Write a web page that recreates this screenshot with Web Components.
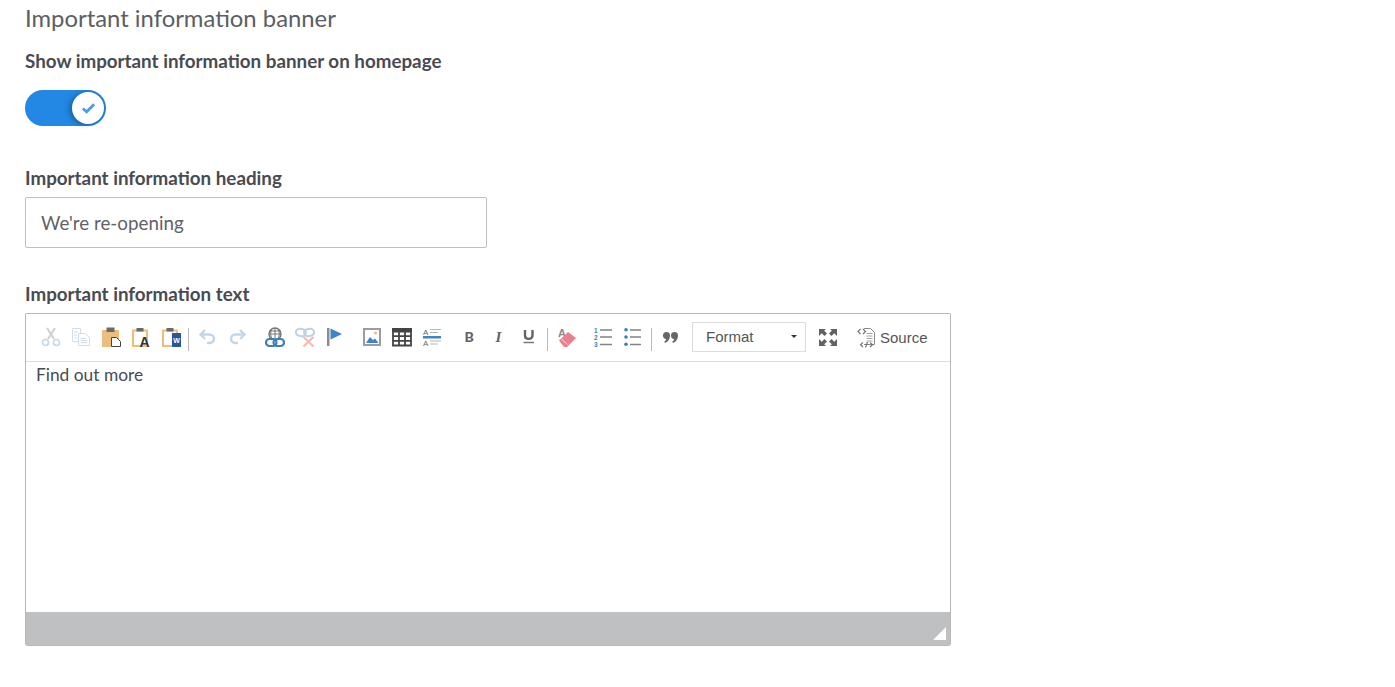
<!DOCTYPE html>
<html>
<head>
<meta charset="utf-8">
<title>Important information banner</title>
<style>
html, body { margin: 0; background: #fff; }
body { font-family: Lato, "Liberation Sans", sans-serif; color: #484b51; }
</style>
</head>
<body>
<banner-form>
  <section-title>Important information banner</section-title>
  <form-field label="Show important information banner on homepage" gap="17" after="40"><toggle-switch></toggle-switch></form-field>
  <form-field label="Important information heading" gap="7" after="34"><text-box value="We're re-opening"></text-box></form-field>
  <form-field label="Important information text" gap="7" after="0"><rich-editor>Find out more</rich-editor></form-field>
</banner-form>

<script>
(function () {
  function define(name, css, html, init) {
    customElements.define(name, class extends HTMLElement {
      constructor() {
        super();
        this.attachShadow({ mode: "open" });
        this.shadowRoot.innerHTML = "<style>" + css + "</style>" + html;
      }
      connectedCallback() {
        if (init) init.call(this, this.shadowRoot);
      }
    });
  }

  define("banner-form", ":host{display:block;padding:3px 0 0 25px}", "<slot></slot>");

  define("section-title",
    ":host{display:block;font-size:23.85px;line-height:30px;color:#5b5e63;margin-bottom:16px;font-weight:400}",
    "<slot></slot>");

  define("form-field",
    ":host{display:block} .l{font-size:18.8px;line-height:24px;font-weight:700;color:#484b51}",
    '<div class="l"></div><div class="c"><slot></slot></div>',
    function (root) {
      root.querySelector(".l").textContent = this.getAttribute("label");
      root.querySelector(".l").style.marginBottom = this.getAttribute("gap") + "px";
      this.style.marginBottom = this.getAttribute("after") + "px";
    });

  define("toggle-switch",
    ":host{display:block;width:81px;height:36px;border-radius:18px;background:linear-gradient(90deg,#2387e4 0,#2387e4 60%,#1f7fd8 100%);position:relative}" +
    ".k{position:absolute;right:2px;top:2px;width:32px;height:32px;border-radius:50%;background:#fff;box-shadow:-3px 1px 5px rgba(0,0,0,.25);display:flex;align-items:center;justify-content:center}",
    '<div class="k"><svg width="15" height="12" viewBox="0 0 16 12"><path d="M2 6.5 6 10 14 2" fill="none" stroke="#4a9ded" stroke-width="3"/></svg></div>');

  define("text-box",
    ":host{display:block;box-sizing:border-box;width:462px;height:51px;border:1px solid #bdbfc2;border-radius:2px;padding:0 15px;font-size:18.8px;line-height:49px;color:#5f6266}",
    '<span class="v"></span>',
    function (root) { root.querySelector(".v").textContent = this.getAttribute("value"); });

  const boardOpen = '<path d="M2 3.500h14V19H2z" fill="#fff" stroke="#eabf7c" stroke-width="2"/><path d="M5.500 1h7v3.500h-7z" fill="#6a6a6a"/>';

  // toolbar icons, drawn on a 20x20 box
  const icons = {
    cut: '<path d="M7 12 14 1M13 12 6 1" stroke="#cfcfcf" stroke-width="2" fill="none"/><circle cx="4.500" cy="15.500" r="3" fill="none" stroke="#c5d9ea" stroke-width="1.700"/><circle cx="15.500" cy="15.500" r="3" fill="none" stroke="#c5d9ea" stroke-width="1.700"/>',
    copy: '<g fill="#fff" stroke="#d3dde6"><path d="M1.500 1.500h8v13h-8z"/><path d="M7.500 6.500h7l4 4v8h-11z"/><path d="M3 5h4M3 8h3M3 11h3M9.500 11.500h5M9.500 13.500h7M9.500 15.500h7"/></g>',
    paste: '<path d="M1 3h17v17H1z" fill="#eabf7c"/><path d="M5.500 .5h8V5h-8z" fill="#6a6a6a"/><path d="M10.500 10.500h5l4 4v5h-9z" fill="#fff" stroke="#444"/>',
    pasteText: boardOpen + '<text x="8.500" y="20" font-family="Liberation Sans" font-size="14" font-weight="700" fill="#333">A</text>',
    pasteWord: boardOpen + '<path d="M11 6h9v14h-9z" fill="#2a5699"/><text x="12.300" y="16" font-family="Liberation Sans" font-size="7" font-weight="700" fill="#fff">W</text>',
    undo: '<path d="M7 3 2.500 7.500 7 12M3 7.500h8.500c6 0 6 8.500 0 8.500H9" fill="none" stroke="#c3d6e8" stroke-width="2.400"/>',
    redo: '<path d="M12 3l4.500 4.500L12 12M16 7.500H7.500c-6 0-6 8.500 0 8.500H10" fill="none" stroke="#c3d6e8" stroke-width="2.400"/>',
    link: '<circle cx="10" cy="7" r="6" fill="none" stroke="#777" stroke-width="1.400"/><path d="M4 7h12M4.500 4h11M10 1v10M6.500 2q-2 5 0 9M13.500 2q2 5 0 9" fill="none" stroke="#777"/><rect x="1" y="12" width="10.500" height="7" rx="3.500" fill="#fff" stroke="#3f7fb8" stroke-width="2.200"/><rect x="8.500" y="12" width="10.500" height="7" rx="3.500" fill="none" stroke="#3f7fb8" stroke-width="2.200"/>',
    unlink: '<g fill="none" stroke="#bdd2e6" stroke-width="2"><rect x="1" y="2" width="10" height="7" rx="3.500" transform="rotate(8 6 5)"/><rect x="9" y="2" width="10" height="7" rx="3.500" transform="rotate(-8 14 5)"/></g><path d="M8.500 10 18.500 19.500M18.500 10 8.500 19.500" stroke="#f4bcae" stroke-width="2.200"/>',
    anchor: '<path d="M2 1h2.500v18H2z" fill="#8a8c90"/><path d="M5.500 1.500 17 7 5.500 12.500z" fill="#3f83c8"/>',
    image: '<path d="M2 2h16v16H2z" fill="#fff" stroke="#9a9c9f" stroke-width="2"/><circle cx="13.500" cy="6" r="1.600" fill="#eabf7c"/><path d="M4 16l4-6 3 3 2-1.500 3.500 4.500z" fill="#3f83c8"/>',
    table: '<path d="M0 1h20v4H0z" fill="#444"/><path d="M1 4.500h18v14H1zM7 4.500v14M13 4.500v14M1 9.200h18M1 13.800h18" fill="none" stroke="#444" stroke-width="1.800"/>',
    style: '<text x="1" y="7.500" font-family="Liberation Sans" font-size="8" fill="#666">A</text><text x="1" y="18.500" font-family="Liberation Sans" font-size="8" fill="#666">A</text><path d="M1 9h18v2.500H1z" fill="#3f83c8"/><path d="M8 2.500h11M8 5.500h8M8 14h11M8 17h8" stroke="#b5b5b5"/>',
    bold: '<text x="5.500" y="15" font-family="Lato" font-size="14" font-weight="900" fill="#626468">B</text>',
    italic: '<text x="6.500" y="15" font-family="Liberation Serif" font-style="italic" font-size="15" font-weight="700" fill="#626468">I</text>',
    underline: '<path d="M6 3v5.500c0 4.500 7.500 4.500 7.500 0V3" fill="none" stroke="#626468" stroke-width="2.400"/><path d="M4.500 15.500h10.500" stroke="#77797c" stroke-width="1.700"/>',
    eraser: '<text x="1" y="10" font-family="Liberation Sans" font-size="11" font-weight="700" fill="#8a8a8a">A</text><path d="M2 13.500 11 5l8 6-9 9H7z" fill="#e8808f"/><path d="M4.500 12l6 5.500" stroke="#fbdfe3"/>',
    ol: '<text x="1" y="5.500" font-family="Liberation Sans" font-size="6.500" font-weight="700" fill="#3f7fb8">1</text><text x="1" y="12.500" font-family="Liberation Sans" font-size="6.500" font-weight="700" fill="#3f7fb8">2</text><text x="1" y="20" font-family="Liberation Sans" font-size="6.500" font-weight="700" fill="#3f7fb8">3</text><path d="M7 3h12M7 10h12M7 17.500h12" stroke="#808285" stroke-width="1.300"/>',
    ul: '<circle cx="3" cy="2.800" r="1.800" fill="#3f7fb8"/><circle cx="3" cy="10" r="1.800" fill="#3f7fb8"/><circle cx="3" cy="17.200" r="1.800" fill="#3f7fb8"/><path d="M7 3h11M7 10h11M7 17.500h11" stroke="#808285" stroke-width="1.300"/>',
    quote: '<g fill="#666"><path d="M2 8.500a3.500 3.500 0 0 1 7 0c0 4-2.500 6.500-5 7.500l-.8-1.200c1-.7 1.800-1.800 2-2.800A3.500 3.500 0 0 1 2 8.500z"/><path d="M10 8.500a3.500 3.500 0 0 1 7 0c0 4-2.500 6.500-5 7.500l-.8-1.200c1-.7 1.800-1.800 2-2.800A3.500 3.500 0 0 1 10 8.500z"/></g>',
    max: '<g fill="#626262"><path d="M1 2h7L6.200 3.800 9 6.500 6.500 9 3.800 6.200 1 9zM19 2v7l-2.800-2.800L13.500 9 11 6.500l2.800-2.700L12 2zM1 19v-7l2.800 2.800 2.700-2.800L9 14.500l-2.800 2.700L8 19zM19 19h-7l1.800-1.800L11 14.500l2.500-2.500 2.700 2.800L19 12z"/></g>',
    source: '<path d="M7 1.500h6.500l4 4v12H7" fill="#fff" stroke="#8a8a8a"/><path d="M9.500 6.500h6M9.500 9h6M9.500 11.500h6M9.500 14h6" stroke="#a5a5a5"/><path d="M3.500 2 1 4.500 3.500 7M6 2l2.500 2.500L6 7M6 15.500l-2.500 2.200L6 20M13 15.500l2.500 2.200L13 20M10.500 15l-2 5.500" fill="none" stroke="#6f6f6f" stroke-width="1.100"/>'
  };

  define("tb-icon",
    ":host{display:flex;align-items:center;justify-content:center;flex:none;width:30px;height:30px} svg{display:block}",
    '<svg width="20" height="26" viewBox="0 -3 20 26"></svg>',
    function (root) { root.querySelector("svg").innerHTML = icons[this.getAttribute("name")]; });

  define("tb-sep", ":host{display:block;flex:none;width:1px;height:23px;background:#b9bbbd;align-self:flex-start;margin-top:6px}", "");

  define("format-combo",
    ":host{display:flex;flex:none;box-sizing:border-box;width:114px;height:30px;border:1px solid #dcdcdc;background:#fff;align-items:center;padding:0 13px 2px;font:15px 'Liberation Sans',sans-serif;color:#555;position:relative}" +
    ".a{position:absolute;right:8px;top:12px;border:3px solid transparent;border-top-color:#333;border-bottom:0}",
    '<span>Format</span><span class="a"></span>');

  define("rich-editor",
    ":host{display:block;box-sizing:border-box;width:926px;height:333px;border:1px solid #b6b8ba;border-radius:2px;background:#fff;overflow:hidden}" +
    ".tb{display:flex;border-bottom:1px solid #dcdcdc;padding:8px 0 0 10px;box-sizing:border-box;height:48px;color:#484848}" +
    ".src{display:flex;align-items:center;flex:none;margin-left:14px;font:15px 'Liberation Sans',sans-serif;gap:3px;height:30px;color:#555}" +
    ".body{height:250px;box-sizing:border-box;padding:1px 10px;font-size:17.35px;line-height:24px;color:#484b51}" +
    ".foot{height:33px;background:#bfc0c2;display:flex;justify-content:flex-end;align-items:flex-end;padding:0 4px 5px 0;box-sizing:border-box}",
    '<div class="tb">' +
    '<tb-icon name="cut"></tb-icon><tb-icon name="copy"></tb-icon><tb-icon name="paste"></tb-icon><tb-icon name="pasteText"></tb-icon><tb-icon name="pasteWord"></tb-icon>' +
    '<tb-sep style="margin-left:2px;margin-right:4px"></tb-sep>' +
    '<tb-icon name="undo"></tb-icon><tb-icon name="redo"></tb-icon>' +
    '<tb-icon name="link" style="margin-left:7px"></tb-icon><tb-icon name="unlink"></tb-icon><tb-icon name="anchor"></tb-icon>' +
    '<tb-icon name="image" style="margin-left:7px"></tb-icon><tb-icon name="table"></tb-icon><tb-icon name="style"></tb-icon>' +
    '<tb-icon name="bold" style="margin-left:7px"></tb-icon><tb-icon name="italic"></tb-icon><tb-icon name="underline"></tb-icon>' +
    '<tb-sep style="margin-left:3px;margin-right:4px"></tb-sep>' +
    '<tb-icon name="eraser"></tb-icon>' +
    '<tb-icon name="ol" style="margin-left:6px"></tb-icon><tb-icon name="ul"></tb-icon>' +
    '<tb-sep style="margin-left:3px;margin-right:4px"></tb-sep>' +
    '<tb-icon name="quote"></tb-icon>' +
    '<format-combo style="margin-left:6px"></format-combo>' +
    '<tb-icon name="max" style="margin-left:7px"></tb-icon>' +
    '<div class="src"><tb-icon name="source" style="width:20px"></tb-icon><span>Source</span></div>' +
    '</div>' +
    '<div class="body"><slot></slot></div>' +
    '<div class="foot"><svg width="13" height="13" viewBox="0 0 13 13"><path d="M13 0v13H0z" fill="#fff"/></svg></div>');
})();
</script>
</body>
</html>
